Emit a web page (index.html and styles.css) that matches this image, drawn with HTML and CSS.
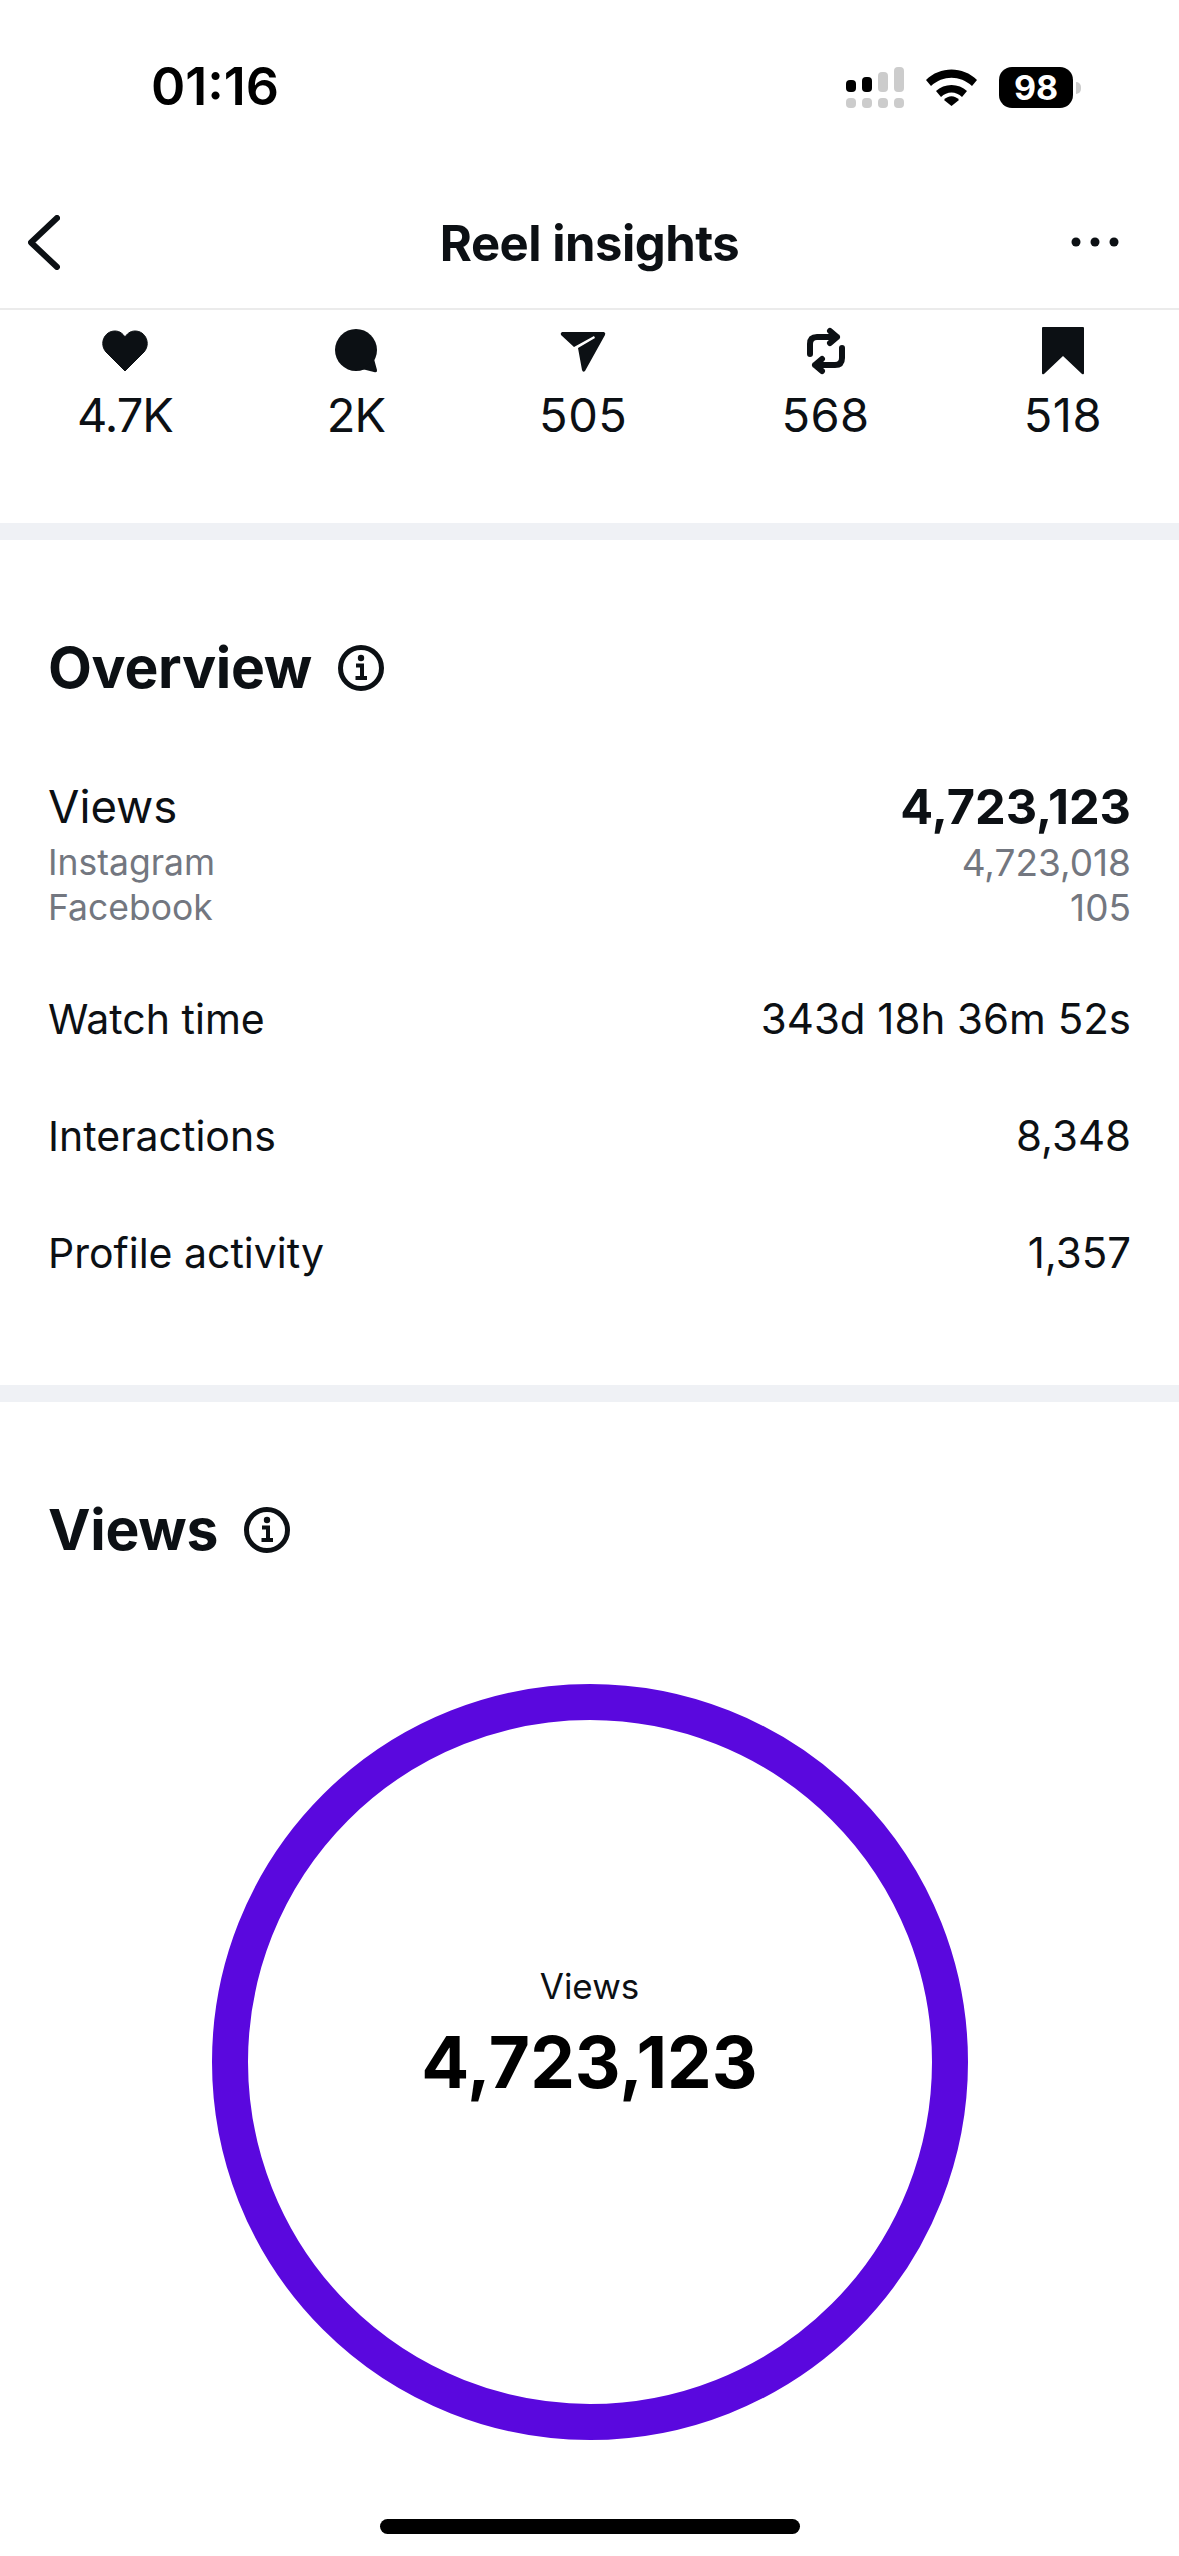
FILE: index.html
```html
<!DOCTYPE html>
<html lang="en">
<head>
    <meta charset="UTF-8">
    <meta name="viewport" content="width=device-width, initial-scale=1.0">
    <title>Reel insights</title>
    <link rel="stylesheet" href="styles.css">
</head>
<body>
    <div class="status-bar">
        <span class="time">01:16</span>
        <div class="status-icons">
            <svg class="signal" width="58" height="41" viewBox="0 0 58 41">
                <rect x="0" y="13" width="10" height="12" rx="4" fill="#000"/>
                <rect x="16" y="10" width="10" height="15" rx="4" fill="#000"/>
                <rect x="32" y="5" width="10" height="20" rx="4" fill="#ccc"/>
                <rect x="48" y="0" width="10" height="25" rx="4" fill="#ccc"/>
                <rect x="0" y="31" width="10" height="10" rx="4" fill="#ccc"/>
                <rect x="16" y="31" width="10" height="10" rx="4" fill="#ccc"/>
                <rect x="32" y="31" width="10" height="10" rx="4" fill="#ccc"/>
                <rect x="48" y="31" width="10" height="10" rx="4" fill="#ccc"/>
            </svg>
            <svg class="wifi" width="51" height="37" viewBox="0 0 51 37">
                <path d="M0 11 C14 -3 37 -3 51 11 L46 17 C34 6 17 6 5 17 Z" fill="#000"/>
                <path d="M10 22 C18 14 33 14 41 22 L36 28 C30 22 21 22 15 28 Z" fill="#000"/>
                <path d="M18 31 C22 26 29 26 33 31 L25.500 37 Z" fill="#000"/>
            </svg>
            <div class="battery"><span>98</span></div>
            <div class="battery-cap"></div>
        </div>
    </div>

    <header class="topbar">
        <svg class="back" width="32" height="55" viewBox="0 0 32 55">
            <path d="M29 3 L3 27.500 L29 52" fill="none" stroke="#0c1014" stroke-width="6" stroke-linecap="round" stroke-linejoin="round"/>
        </svg>
        <h1>Reel insights</h1>
        <svg class="more" width="48" height="10" viewBox="0 0 48 10">
            <circle cx="5" cy="5" r="4.500" fill="#0c1014"/>
            <circle cx="24" cy="5" r="4.500" fill="#0c1014"/>
            <circle cx="43" cy="5" r="4.500" fill="#0c1014"/>
        </svg>
    </header>

    <section class="stats">
        <div class="stat stat-short">
            <svg width="48" height="48" viewBox="0 0 48 48">
                <path d="M24 44 L5 25 C-2 17 3 4 14 4 C19 4 22 7 24 10 C26 7 29 4 34 4 C45 4 50 17 43 25 Z" fill="#0c1014" stroke="#0c1014" stroke-linejoin="round"/>
            </svg>
            <span>4.7K</span>
        </div>
        <div class="stat stat-short">
            <svg width="48" height="48" viewBox="0 0 48 48">
                <circle cx="24" cy="23" r="21" fill="#0c1014"/>
                <path d="M36 38 L42 32 L45 43 Q45.500 46 42 45 L30 42 Z" fill="#0c1014"/>
            </svg>
            <span>2K</span>
        </div>
        <div class="stat">
            <svg width="48" height="48" viewBox="0 0 48 48">
                <path d="M3 5 L45 5 Q47 6 46 8 L26 44 Q24 46 23 43 L19 21 L36 11 L35 9 L15 20 L2 8 Q1 6 3 5 Z" fill="#0c1014"/>
            </svg>
            <span>505</span>
        </div>
        <div class="stat">
            <svg width="48" height="48" viewBox="0 0 48 48">
                <path d="M8 27 L8 17 Q8 10 15 10 L35 10 M28 4 L35 10 L28 16 M40 21 L40 31 Q40 38 33 38 L13 38 M20 32 L13 38 L20 44" fill="none" stroke="#0c1014" stroke-width="6" stroke-linecap="round" stroke-linejoin="round"/>
            </svg>
            <span>568</span>
        </div>
        <div class="stat">
            <svg width="48" height="48" viewBox="0 0 48 48">
                <path d="M3 1 Q3 0 4 0 L44 0 Q45 0 45 1 L45 46 Q45 48 43 47 L24 29 L5 47 Q3 48 3 46 Z" fill="#0c1014"/>
            </svg>
            <span>518</span>
        </div>
    </section>

    <section class="overview">
        <div class="section-title">
            <h2>Overview</h2>
            <svg width="46" height="46" viewBox="0 0 46 46">
                <circle cx="23" cy="23" r="20.500" fill="none" stroke="#0c1014" stroke-width="5"/>
                <circle cx="23" cy="13" r="3.200" fill="#0c1014"/>
                <path d="M18 20.500 L24 20.500 L24 33 M17.500 33 L29 33" fill="none" stroke="#0c1014" stroke-width="4"/>
            </svg>
        </div>
        <div class="main-row">
            <span>Views</span>
            <strong>4,723,123</strong>
        </div>
        <div class="sub-row"><span>Instagram</span><span class="sub-value">4,723,018</span></div>
        <div class="sub-row"><span>Facebook</span><span class="sub-value">105</span></div>
        <div class="row first-row"><span>Watch time</span><span class="row-value">343d 18h 36m 52s</span></div>
        <div class="row"><span>Interactions</span><span class="row-value">8,348</span></div>
        <div class="row"><span>Profile activity</span><span class="row-value">1,357</span></div>
    </section>

    <section class="views">
        <div class="section-title">
            <h2>Views</h2>
            <svg width="46" height="46" viewBox="0 0 46 46">
                <circle cx="23" cy="23" r="20.500" fill="none" stroke="#0c1014" stroke-width="5"/>
                <circle cx="23" cy="13" r="3.200" fill="#0c1014"/>
                <path d="M18 20.500 L24 20.500 L24 33 M17.500 33 L29 33" fill="none" stroke="#0c1014" stroke-width="4"/>
            </svg>
        </div>
        <div class="ring">
            <span class="ring-label">Views</span>
            <span class="ring-value">4,723,123</span>
        </div>
    </section>

    <div class="home-indicator"></div>
</body>
</html>
```
FILE: styles.css
```css
html, body {
    margin: 0;
    padding: 0;
}
body {
    width: 1179px;
    height: 2556px;
    overflow: hidden;
    background-color: #fff;
    color: #0c1014;
    font-family: Inter, "Liberation Sans", sans-serif;
}
h1, h2 {
    margin: 0;
}
.status-bar {
    height: 156px;
    box-sizing: border-box;
    padding: 62px 98px 0 151px;
    display: flex;
    justify-content: space-between;
    align-items: flex-start;
}
.time {
    font-size: 52px;
    line-height: 50px;
    font-weight: 600;
    color: #000;
}
.status-icons {
    display: flex;
    align-items: flex-start;
    padding-top: 5px;
}
.signal {
    margin-right: 22px;
}
.wifi {
    margin-top: 2px;
    margin-right: 22px;
}
.battery {
    width: 74px;
    height: 41px;
    border-radius: 13px;
    background-color: #000;
    color: #fff;
    font-size: 34px;
    font-weight: 700;
    line-height: 41px;
    text-align: center;
}
.battery-cap {
    width: 5px;
    height: 12px;
    margin: 15px 0 0 3px;
    background-color: #ccc;
    border-radius: 0 6px 6px 0;
}
.topbar {
    height: 154px;
    box-sizing: border-box;
    border-bottom: 2px solid #ebebeb;
    padding: 59px 28px 0;
    display: grid;
    grid-template-columns: 1fr auto 1fr;
    align-items: start;
}
.topbar h1 {
    font-size: 49px;
    line-height: 56px;
    font-weight: 700;
    letter-spacing: -0.5px;
    margin-top: 1px;
}
.more {
    margin: 22px 32px 0 0;
    justify-self: end;
}
.stats {
    height: 213px;
    box-sizing: border-box;
    padding: 17px 77px 0 77px;
    display: flex;
    justify-content: space-between;
    align-items: flex-start;
}
.stat {
    display: flex;
    flex-direction: column;
    align-items: center;
    gap: 13px;
    font-size: 47px;
    line-height: 54px;
    letter-spacing: 0.5px;
}
.stat-short {
    letter-spacing: -1px;
}
.stat svg {
    display: block;
}
.overview {
    border-top: 17px solid #eff1f5;
    border-bottom: 17px solid #eff1f5;
    height: 879px;
    box-sizing: border-box;
    padding: 93px 48px 0;
}
.section-title {
    display: flex;
    align-items: center;
    gap: 26px;
}
.section-title h2 {
    font-size: 57px;
    line-height: 70px;
    font-weight: 700;
    letter-spacing: -0.3px;
}
.main-row, .sub-row, .row {
    display: flex;
    justify-content: space-between;
}
.main-row {
    margin-top: 76px;
    margin-bottom: 5px;
    font-size: 45.5px;
    line-height: 56px;
}
.main-row strong {
    font-size: 48.7px;
    font-weight: 700;
}
.sub-row {
    font-size: 35.5px;
    line-height: 45px;
    color: #737780;
}
.sub-value {
    font-size: 37px;
}
.row {
    font-size: 41px;
    line-height: 52px;
    margin-top: 65px;
}
.row-value {
    font-size: 42px;
}
.first-row {
    margin-top: 63px;
}
.views {
    padding: 93px 48px 0;
}
.ring {
    box-sizing: border-box;
    width: 756px;
    height: 756px;
    margin: 119px auto 0;
    padding-bottom: 56px;
    border: 36px solid #5a08de;
    border-radius: 50%;
    display: flex;
    flex-direction: column;
    align-items: center;
    justify-content: center;
    gap: 12px;
    color: #000;
}
.ring-label {
    font-size: 35px;
    line-height: 44px;
    color: #0c1014;
}
.ring-value {
    font-size: 71px;
    line-height: 84px;
    font-weight: 700;
}
.home-indicator {
    width: 420px;
    height: 15px;
    margin: 79px auto 0;
    border-radius: 8px;
    background-color: #000;
}
```
